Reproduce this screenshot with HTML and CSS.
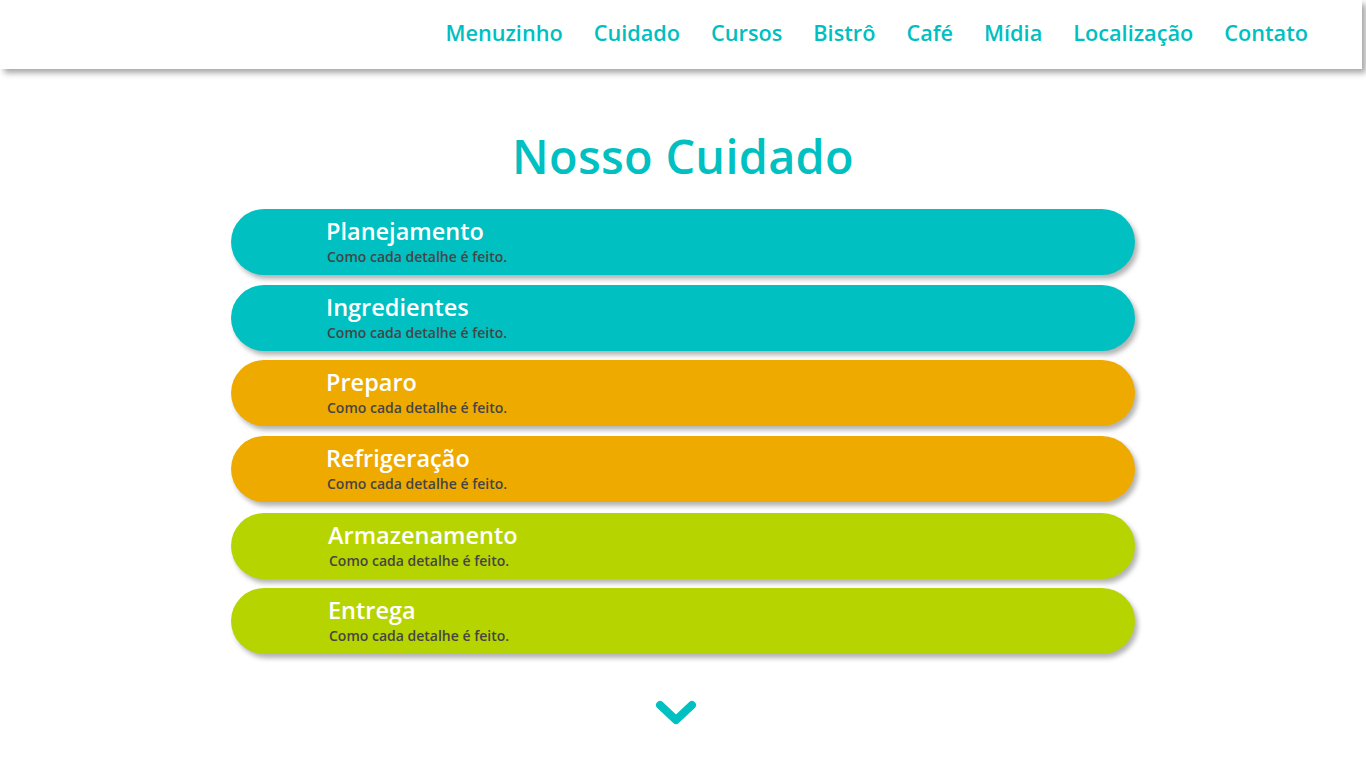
FILE: index.html
```html
<!DOCTYPE html>
<html lang="pt">
<head>
<meta charset="utf-8">
<title>Nosso Cuidado</title>
<link rel="stylesheet" href="styles.css">
</head>
<body>
<header class="topbar">
  <nav class="menu">
    <a href="#">Menuzinho</a>
    <a href="#">Cuidado</a>
    <a href="#">Cursos</a>
    <a href="#">Bistrô</a>
    <a href="#">Café</a>
    <a href="#">Mídia</a>
    <a href="#">Localização</a>
    <a href="#">Contato</a>
  </nav>
</header>
<main class="content">
  <h1 class="title">Nosso Cuidado</h1>
  <ul class="cards">
    <li class="card teal"><span class="card-title">Planejamento</span><span class="card-sub">Como cada detalhe é feito.</span></li>
    <li class="card teal"><span class="card-title">Ingredientes</span><span class="card-sub">Como cada detalhe é feito.</span></li>
    <li class="card orange"><span class="card-title">Preparo</span><span class="card-sub">Como cada detalhe é feito.</span></li>
    <li class="card orange"><span class="card-title">Refrigeração</span><span class="card-sub">Como cada detalhe é feito.</span></li>
    <li class="card green shift"><span class="card-title">Armazenamento</span><span class="card-sub">Como cada detalhe é feito.</span></li>
    <li class="card green shift"><span class="card-title">Entrega</span><span class="card-sub">Como cada detalhe é feito.</span></li>
  </ul>
  <div class="more">
    <svg width="42" height="28" viewBox="0 0 42 28"><path d="M5 6 L21 21 L37 6" fill="none" stroke="#00c0c1" stroke-width="8" stroke-linecap="round" stroke-linejoin="round"/></svg>
  </div>
</main>
</body>
</html>
```

FILE: styles.css
```css
* { box-sizing: border-box; }
html, body { margin: 0; padding: 0; background: #fff; }
body { font-family: "Open Sans", "Noto Sans", sans-serif; width: 1366px; height: 768px; overflow: hidden; }

.topbar {
  height: 69px;
  width: 1362px;
  background: #fff;
  box-shadow: 4px 4px 6px rgba(0,0,0,0.35);
  display: flex;
  justify-content: flex-end;
  align-items: center;
  padding: 0 54px 4px 0;
  position: relative;
  z-index: 2;
}
.menu { display: flex; gap: 31px; }
.menu a {
  color: #00bfc0;
  text-decoration: none;
  font-size: 21.7px;
  font-weight: 600;
}

.content { display: flex; flex-direction: column; align-items: center; }
.title {
  margin: 55px 0 0;
  font-size: 46.8px;
  line-height: 64px;
  font-weight: 600;
  color: #00c0c1;
  letter-spacing: 0.3px;
}
.cards {
  list-style: none;
  margin: 21px 0 0;
  padding: 0;
  display: flex;
  flex-direction: column;
  gap: 10px;
  width: 904px;
}
.card {
  height: 66px;
  border-radius: 33px;
  box-shadow: 3px 4px 5px rgba(0,0,0,0.3);
  display: flex;
  flex-direction: column;
  justify-content: center;
  padding: 0 0 3px 95px;
}
.card:nth-child(3) { margin-top: -1px; }
.card:nth-child(5) { margin-top: 1px; }
.card:nth-child(6) { margin-top: -1px; }
.card.shift { padding-left: 97px; }
.teal { background: #00c0c1; }
.orange { background: #efaa00; }
.green { background: #b6d400; }
.card-title {
  color: #fff;
  font-size: 23.5px;
  font-weight: 600;
  line-height: 32px;
}
.card-sub {
  color: #454545;
  font-size: 14px;
  font-weight: 600;
  line-height: 19px;
  padding-left: 1px;
}
.more { margin-top: 45px; margin-left: -14px; display: flex; }
```
